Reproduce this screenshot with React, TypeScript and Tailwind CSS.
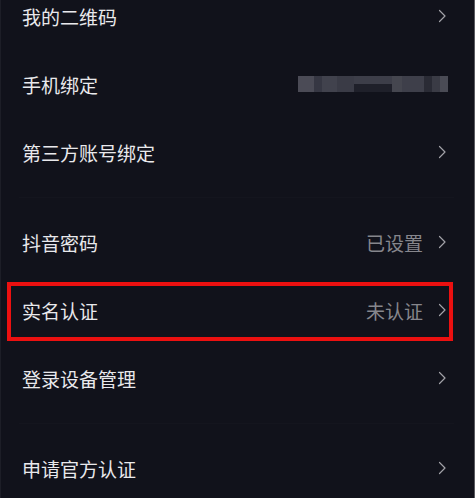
import React from 'react';

type Row = { label: string; value?: string; chevron?: boolean; phone?: boolean; marked?: boolean };

const sections: Row[][] = [
  [
    { label: '我的二维码', chevron: true },
    { label: '手机绑定', phone: true },
    { label: '第三方账号绑定', chevron: true },
  ],
  [
    { label: '抖音密码', value: '已设置', chevron: true },
    { label: '实名认证', value: '未认证', chevron: true, marked: true },
    { label: '登录设备管理', chevron: true },
  ],
  [{ label: '申请官方认证', chevron: true }],
];

const Chevron: React.FC = () => (
  <svg width="10" height="14" viewBox="0 0 10 14" className="shrink-0">
    <polyline points="2.5,1.5 8,7 2.5,12.5" fill="none" stroke="#a2a2a8" strokeWidth="1.2" strokeLinecap="round" strokeLinejoin="round" />
  </svg>
);

// pixelated phone number
const PhoneMosaic: React.FC = () => (
  <div className="flex h-[16px] -mr-[1px]">
    <div className="w-[16px] bg-[#4b4b56]" />
    <div className="w-[8px] bg-[#363743]" />
    <div className="w-[15px] bg-[#41424d]" />
    <div className="w-[17px] bg-[#3a3b46]" />
    <div className="w-[38px] flex flex-col">
      <div className="h-[8px] bg-[#3d3e49]" />
      <div className="flex-1 bg-[#1f202a]" />
    </div>
    <div className="w-[10px] bg-[#45464f]" />
    <div className="w-[22px] bg-[#3e3f4a]" />
    <div className="w-[8px] bg-[#2a2b35]" />
    <div className="w-[8px] bg-[#3a3b45]" />
    <div className="w-[8px] bg-[#4a4b55]" />
  </div>
);

export default function App() {
  return (
    <div
      className="w-[475px] h-[498px] overflow-hidden bg-[#11121b] border-x border-l-[#1d1e27] border-r-[#5a5a60]"
      style={{ fontFamily: '"Noto Sans CJK SC", "Noto Sans", sans-serif' }}
    >
      <div className="-mt-[18px]">
        {sections.map((rows, si) => (
          <div key={si}>
            {si > 0 && (
              <div className="h-[22px] flex items-center pl-[18px] pr-[20px]">
                <div className="h-px w-full bg-[#14151e]" />
              </div>
            )}
            {rows.map((row) => (
              <div key={row.label} className="relative h-[68px] flex items-center justify-between pl-[21px] pr-[27px]">
                <span className="text-[19px] leading-none text-[#e9e9ec]">{row.label}</span>
                <div className="flex items-center gap-[14px]">
                  {row.value && <span className="text-[19px] leading-none text-[#86868c]">{row.value}</span>}
                  {row.phone && <PhoneMosaic />}
                  {row.chevron && <Chevron />}
                </div>
                {row.marked && (
                  <div className="absolute left-[6px] right-[21px] top-[6px] bottom-[3px] border-4 border-[#ec1010]" />
                )}
              </div>
            ))}
          </div>
        ))}
      </div>
    </div>
  );
}
